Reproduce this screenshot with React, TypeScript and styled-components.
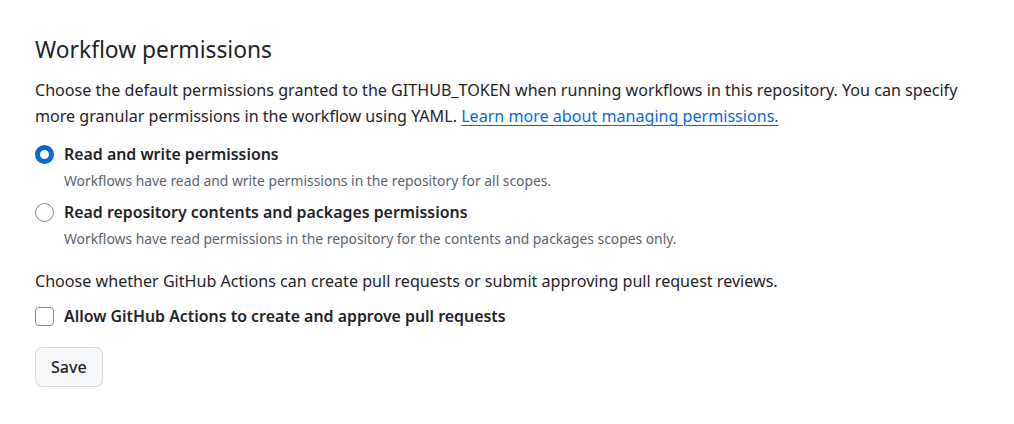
import React from 'react';
import styled, { createGlobalStyle } from 'styled-components';

const GlobalStyle = createGlobalStyle`
    body {
        margin: 0;
        background: #ffffff;
        color: #1f2328;
        font-family: "Noto Sans", "Open Sans", sans-serif;
    }
`;

const Page = styled.div`
    padding: 31px 35px 0 35px;
`;

const Heading = styled.h2`
    margin: 0;
    font-size: 22.8px;
    font-weight: 400;
    line-height: 37.5px;
    color: #1f2328;
`;

const Intro = styled.p`
    margin: 8.5px 0 0 0;
    font-size: 16.1px;
    line-height: 26px;
    max-width: 940px;
`;

const Link = styled.a`
    color: #0969da;
    text-decoration: underline;
    text-underline-offset: 3px;
    text-decoration-thickness: 1px;
`;

const Option = styled.label<{ $gap: number }>`
    display: grid;
    grid-template-columns: 29px 1fr;
    margin-top: ${p => p.$gap}px;
    cursor: pointer;
`;

const ControlCell = styled.span`
    display: flex;
    align-items: center;
    height: 26px;
`;

const Radio = styled.span<{ $checked?: boolean }>`
    box-sizing: border-box;
    width: 19px;
    height: 19px;
    border-radius: 50%;
    background: #ffffff;
    border: ${p => (p.$checked ? '5.5px solid #0969da' : '1px solid #818b98')};
`;

const Checkbox = styled.span`
    box-sizing: border-box;
    width: 19px;
    height: 19px;
    border-radius: 4px;
    background: #ffffff;
    border: 1px solid #818b98;
`;

const OptionLabel = styled.span`
    font-size: 15.9px;
    font-weight: 600;
    line-height: 26px;
`;

const Note = styled.span`
    grid-column: 2;
    margin-top: 3px;
    font-size: 13.85px;
    line-height: 22.5px;
    color: #59636e;
`;

const Question = styled.p`
    margin: 17.5px 0 0 0;
    font-size: 16.1px;
    line-height: 26px;
`;

const SaveButton = styled.button`
    margin-top: 18px;
    height: 40px;
    padding: 0 15px;
    border: 1px solid #d1d9e0;
    border-radius: 7.5px;
    background: #f6f8fa;
    color: #1f2328;
    font-family: inherit;
    font-size: 16px;
    font-weight: 500;
    box-shadow: 0 1px 0 rgba(31, 35, 40, 0.04);
`;

export default function App() {
    return (
        <Page>
            <GlobalStyle />
            <Heading>Workflow permissions</Heading>
            <Intro>
                Choose the default permissions granted to the GITHUB_TOKEN when running workflows in this repository. You can specify
                more granular permissions in the workflow using YAML. <Link href="#">Learn more about managing permissions.</Link>
            </Intro>
            <Option $gap={12}>
                <ControlCell><Radio $checked /></ControlCell>
                <OptionLabel>Read and write permissions</OptionLabel>
                <Note>Workflows have read and write permissions in the repository for all scopes.</Note>
            </Option>
            <Option $gap={6.5}>
                <ControlCell><Radio /></ControlCell>
                <OptionLabel>Read repository contents and packages permissions</OptionLabel>
                <Note>Workflows have read permissions in the repository for the contents and packages scopes only.</Note>
            </Option>
            <Question>Choose whether GitHub Actions can create pull requests or submit approving pull request reviews.</Question>
            <Option $gap={9}>
                <ControlCell><Checkbox /></ControlCell>
                <OptionLabel>Allow GitHub Actions to create and approve pull requests</OptionLabel>
            </Option>
            <SaveButton>Save</SaveButton>
        </Page>
    );
}
